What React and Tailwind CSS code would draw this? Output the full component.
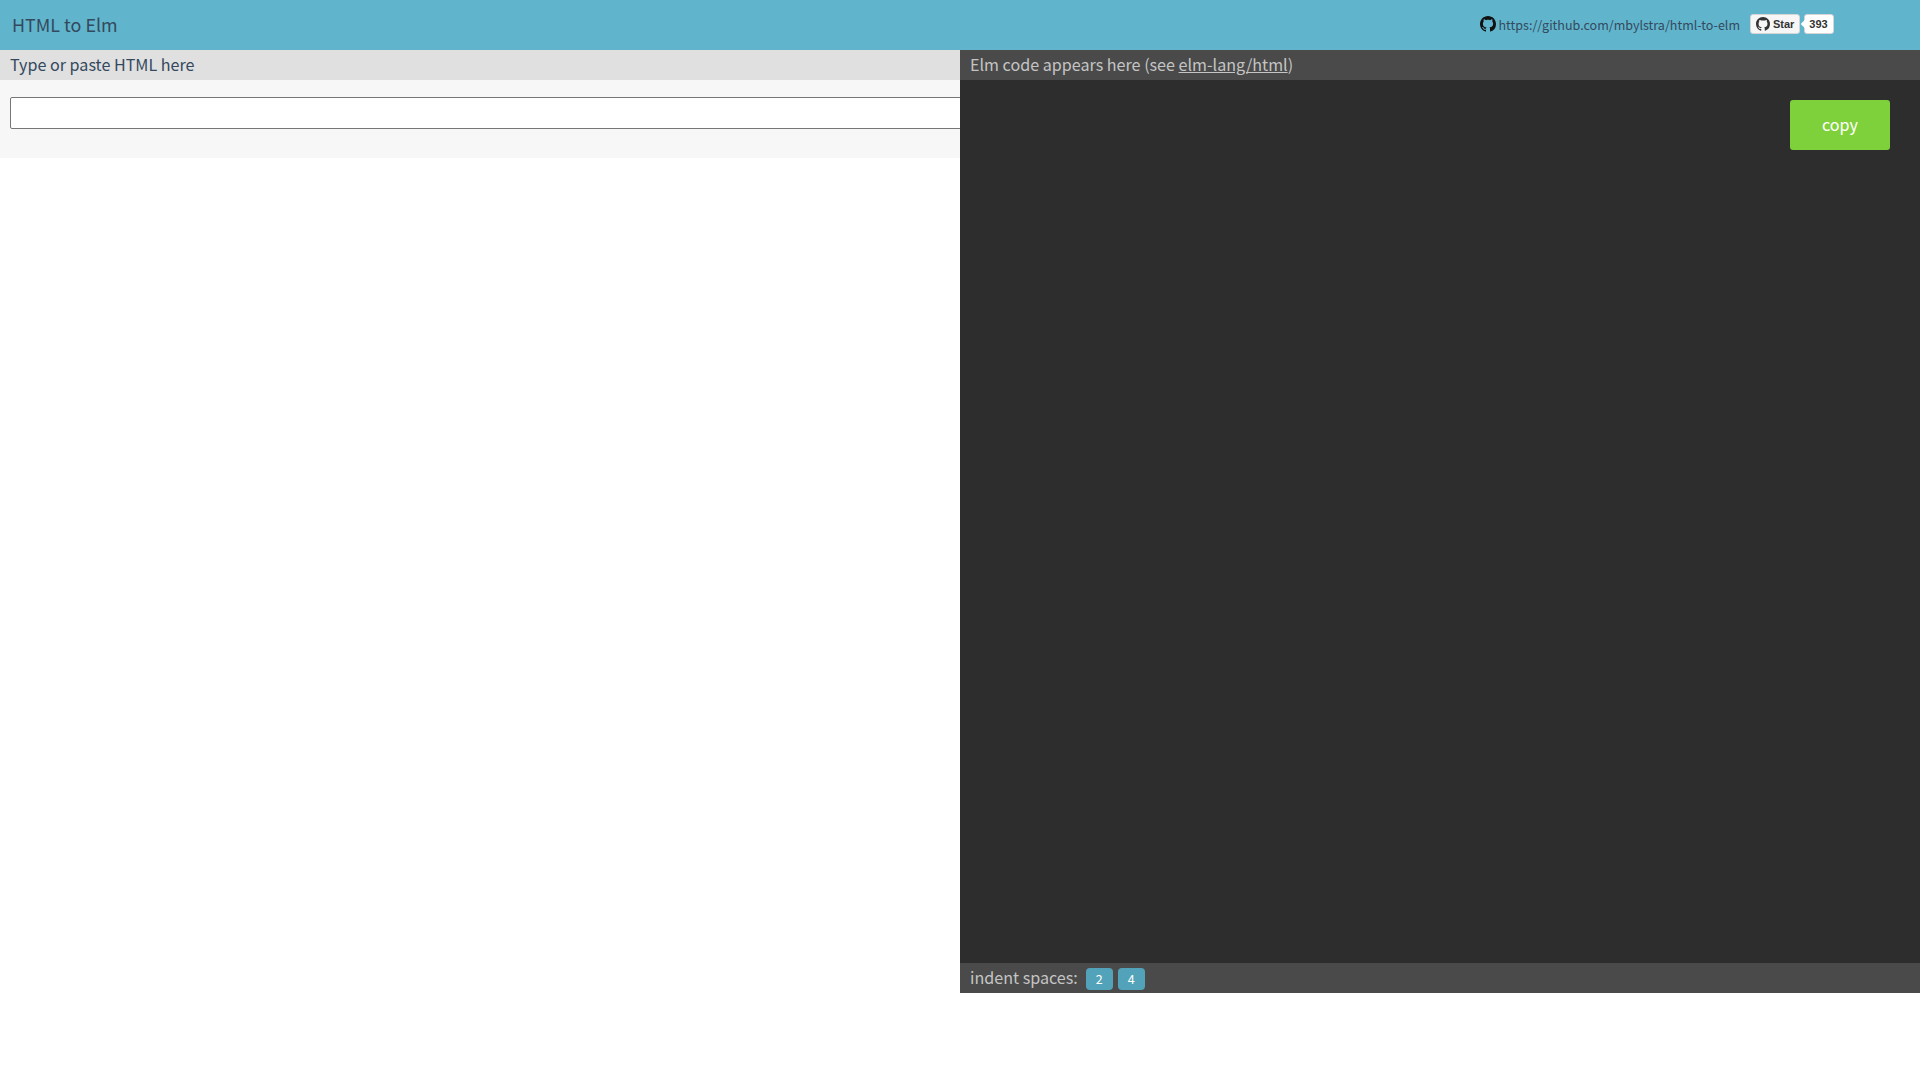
function Octo({ className }) {
  return (
    <svg viewBox="0 0 16 16" className={className} fill="currentColor">
      <path fillRule="evenodd" d="M8 0C3.58 0 0 3.58 0 8c0 3.54 2.29 6.53 5.47 7.59.4.07.55-.17.55-.38 0-.19-.01-.82-.01-1.49-2.01.37-2.53-.49-2.69-.94-.09-.23-.48-.94-.82-1.13-.28-.15-.68-.52-.01-.53.63-.01 1.08.58 1.23.82.72 1.21 1.87.87 2.33.66.07-.52.28-.87.51-1.07-1.78-.2-3.64-.89-3.64-3.95 0-.87.31-1.59.82-2.15-.08-.2-.36-1.02.08-2.12 0 0 .67-.21 2.2.82.64-.18 1.32-.27 2-.27.68 0 1.36.09 2 .27 1.53-1.04 2.2-.82 2.2-.82.44 1.1.16 1.92.08 2.12.51.56.82 1.27.82 2.15 0 3.07-1.87 3.75-3.65 3.95.29.25.54.73.54 1.48 0 1.07-.01 1.93-.01 2.2 0 .21.15.46.55.38A8.013 8.013 0 0016 8c0-4.42-3.58-8-8-8z" />
    </svg>
  );
}

export default function App() {
  return (
    <div className="h-[1080px] w-[1920px] overflow-hidden bg-white font-['Noto_Sans_CJK_JP',sans-serif] text-[#34495e]">
      <header className="flex h-[50px] items-center bg-[#60b5cc] pl-3">
        <span className="pb-[2px] text-[17.92px] leading-[46px]">HTML to Elm</span>
        <div className="ml-auto flex items-center pr-[86px]">
          <Octo className="mb-[3px] h-4 w-4 text-[#111]" />
          <a className="ml-[2px] text-[12.54px] leading-[50px]">https://github.com/mbylstra/html-to-elm</a>
          <div className="mb-[2px] ml-[10px] flex h-5 items-center font-['Liberation_Sans',sans-serif] text-[11px] font-bold text-[#333]">
            <div className="flex h-5 w-[50px] items-center rounded-[3px] border border-[#d5d5d5] bg-[#f6f6f6] pl-[5px]">
              <Octo className="h-[14px] w-[14px] text-[#333]" />
              <span className="ml-[3px]">Star</span>
            </div>
            <div className="relative ml-[4px] flex h-5 w-[30px] items-center justify-center rounded-[3px] border border-[#d5d5d5] bg-white pr-[1px]">
              <span className="absolute left-[-3px] top-[6px] h-[6px] w-[6px] rotate-45 bg-white" />
              <span className="relative">393</span>
            </div>
          </div>
        </div>
      </header>
      <main className="flex items-start">
        <section className="w-[960px] overflow-hidden">
          <div className="h-[30px] bg-[#e0e0e0] pl-[10px] text-[16.13px] leading-[28px]">Type or paste HTML here</div>
          <div className="h-[78px] bg-[#f7f7f7] pl-[10px] pt-[17px]">
            <textarea className="block h-[32px] w-[1000px] resize-none rounded-[2px] border border-[#767676] bg-white" />
          </div>
        </section>
        <section className="flex h-[943px] w-[960px] flex-col bg-[#2d2d2d] text-[#c4c4c4]">
          <div className="h-[30px] bg-[#4a4a4a] pl-[10px] text-[16.13px] leading-[28px]">
            Elm code appears here (see <a className="underline">elm-lang/html</a>)
          </div>
          <div className="flex flex-1 items-start justify-end pr-[30px] pt-5">
            <button className="h-[50px] w-[100px] rounded-[3px] bg-[#7fd13b] pb-[2px] text-[16.13px] text-white">copy</button>
          </div>
          <div className="flex h-[30px] items-center bg-[#4a4a4a] pl-[10px] text-[16.13px]">
            <span className="pb-[2px]">indent spaces:</span>
            <button className="ml-2 mt-[2px] h-[22px] w-[27px] rounded-[4px] bg-[#52a3b9] text-[12.5px] text-white">2</button>
            <button className="ml-[5px] mt-[2px] h-[22px] w-[27px] rounded-[4px] bg-[#52a3b9] text-[12.5px] text-white">4</button>
          </div>
        </section>
      </main>
    </div>
  );
}
